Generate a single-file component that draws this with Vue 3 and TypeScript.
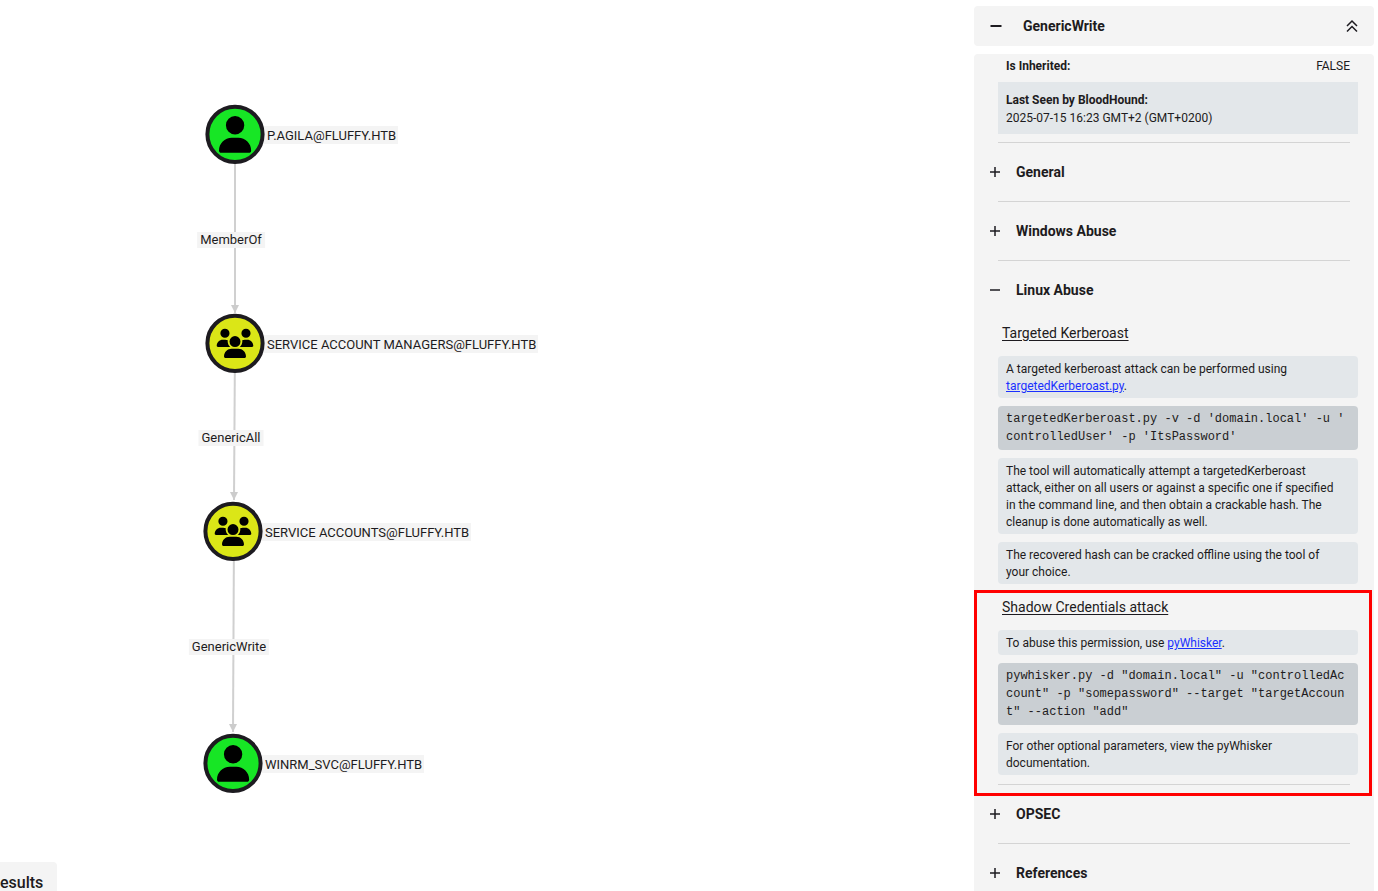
<script setup lang="ts">
import { ref } from 'vue'

type NodeKind = 'user' | 'group'

interface GraphNode {
  name: string
  kind: NodeKind
  x: number
  y: number
}

interface GraphEdge {
  label: string
  x1: number
  y1: number
  x2: number
  y2: number
  labelX: number
  labelY: number
}

const nodes: GraphNode[] = [
  { name: 'P.AGILA@FLUFFY.HTB', kind: 'user', x: 235, y: 134 },
  { name: 'SERVICE ACCOUNT MANAGERS@FLUFFY.HTB', kind: 'group', x: 235, y: 343 },
  { name: 'SERVICE ACCOUNTS@FLUFFY.HTB', kind: 'group', x: 233, y: 531 },
  { name: 'WINRM_SVC@FLUFFY.HTB', kind: 'user', x: 233, y: 763 },
]

const edges: GraphEdge[] = [
  { label: 'MemberOf', x1: 235, y1: 134, x2: 235, y2: 313, labelX: 231, labelY: 240 },
  { label: 'GenericAll', x1: 235, y1: 343, x2: 234, y2: 500, labelX: 231, labelY: 438 },
  { label: 'GenericWrite', x1: 234, y1: 531, x2: 233, y2: 732, labelX: 229, labelY: 647 },
]

const arrow = (e: GraphEdge): string =>
  `${e.x2 - 4},${e.y2 - 8} ${e.x2 + 4},${e.y2 - 8} ${e.x2},${e.y2}`

const place = (x: number, y: number) => ({ left: `${x}px`, top: `${y}px` })

const targetedCommand = "targetedKerberoast.py -v -d 'domain.local' -u '\ncontrolledUser' -p 'ItsPassword'"
const whiskerCommand =
  'pywhisker.py -d "domain.local" -u "controlledAccount" -p "somepassword" --target "targetAccount" --action "add"'

const panelOpen = ref(true)
const open = ref<Record<string, boolean>>({ linux: true })
const toggle = (key: string) => {
  open.value[key] = !open.value[key]
}
const collapseAll = () => {
  open.value = {}
}
</script>

<template>
  <div class="explore">
    <main class="graph">
      <svg class="edges" aria-hidden="true">
        <g v-for="e in edges" :key="e.label">
          <line :x1="e.x1" :y1="e.y1" :x2="e.x2" :y2="e.y2" />
          <polygon :points="arrow(e)" />
        </g>
      </svg>
      <span v-for="e in edges" :key="e.label" class="edge-label" :style="place(e.labelX, e.labelY)">{{ e.label }}</span>
      <div v-for="n in nodes" :key="n.name" class="node" :style="place(n.x, n.y)">
        <svg class="disc" :class="n.kind" viewBox="-30 -30 60 60" aria-hidden="true">
          <circle cy="0.300" r="27.600" />
          <path
            v-if="n.kind === 'user'"
            transform="translate(-16 -18) scale(0.0718)"
            d="M224 256A128 128 0 1 0 224 0a128 128 0 1 0 0 256zm-45.700 48C79.800 304 0 383.800 0 482.300C0 498.700 13.300 512 29.700 512H418.300c16.400 0 29.700-13.300 29.700-29.700C448 383.800 368.200 304 269.700 304H178.300z"
          />
          <path
            v-else
            transform="translate(-18.300 -14.300) scale(0.0572)"
            d="M144 0a80 80 0 1 1 0 160A80 80 0 1 1 144 0zM512 0a80 80 0 1 1 0 160A80 80 0 1 1 512 0zM0 298.700C0 239.800 47.800 192 106.700 192h42.700c15.900 0 31 3.500 44.600 9.700c-1.300 7.200-1.900 14.700-1.900 22.300c0 38.200 16.800 72.500 43.300 96H21.300C9.600 320 0 310.400 0 298.700zM405.300 320h-.7c26.600-23.500 43.300-57.800 43.300-96c0-7.600-.7-15-1.900-22.300c13.600-6.300 28.700-9.700 44.600-9.700h42.700C592.200 192 640 239.800 640 298.700c0 11.800-9.600 21.300-21.300 21.300H405.300zM224 224a96 96 0 1 1 192 0 96 96 0 1 1-192 0zM128 485.300C128 411.700 187.700 352 261.300 352H378.700C452.300 352 512 411.700 512 485.300c0 14.700-11.900 26.700-26.700 26.700H154.700c-14.700 0-26.700-11.900-26.700-26.700z"
          />
        </svg>
        <span class="node-label">{{ n.name }}</span>
      </div>
      <div class="results">esults</div>
    </main>

    <aside class="side">
      <header class="title-bar">
        <button class="icon-btn thick" type="button" aria-label="Toggle panel" @click="panelOpen = !panelOpen">
          <svg width="12" height="12" viewBox="0 0 12 12"><path d="M0.500 6H11.500" /></svg>
        </button>
        <h1>GenericWrite</h1>
        <button class="icon-btn" type="button" aria-label="Collapse all" @click="collapseAll">
          <svg width="12" height="14" viewBox="0 0 12 14"><path d="M1 7L6 2L11 7M1 12.500L6 7.500L11 12.500" /></svg>
        </button>
      </header>

      <div v-show="panelOpen" class="body">
        <dl class="facts">
          <div class="fact">
            <dt>Is Inherited:</dt>
            <dd>FALSE</dd>
          </div>
          <div class="fact shaded">
            <dt>Last Seen by BloodHound:</dt>
            <dd>2025-07-15 16:23 GMT+2 (GMT+0200)</dd>
          </div>
        </dl>

        <hr />
        <button class="section" type="button" @click="toggle('general')">
          <svg width="10" height="10" viewBox="0 0 10 10"><path d="M0 5H10M5 0V10" /></svg>General
        </button>
        <hr />
        <button class="section" type="button" @click="toggle('windows')">
          <svg width="10" height="10" viewBox="0 0 10 10"><path d="M0 5H10M5 0V10" /></svg>Windows Abuse
        </button>
        <hr />
        <button class="section" type="button" :aria-expanded="!!open.linux" @click="toggle('linux')">
          <svg width="10" height="10" viewBox="0 0 10 10"><path :d="open.linux ? 'M0 5H10' : 'M0 5H10M5 0V10'" /></svg>Linux Abuse
        </button>
        <div v-if="open.linux" class="attack">
          <h2>Targeted Kerberoast</h2>
          <p>A targeted kerberoast attack can be performed using <a href="#targetedKerberoast">targetedKerberoast.py</a>.</p>
          <pre>{{ targetedCommand }}</pre>
          <p>
            The tool will automatically attempt a targetedKerberoast<br />
            attack, either on all users or against a specific one if specified<br />
            in the command line, and then obtain a crackable hash. The<br />
            cleanup is done automatically as well.
          </p>
          <p>
            The recovered hash can be cracked offline using the tool of<br />
            your choice.
          </p>
        </div>
        <div v-if="open.linux" class="attack marked">
          <h2>Shadow Credentials attack</h2>
          <p>To abuse this permission, use <a href="#pyWhisker">pyWhisker</a>.</p>
          <pre>{{ whiskerCommand }}</pre>
          <p>
            For other optional parameters, view the pyWhisker<br />
            documentation.
          </p>
        </div>
        <hr />
        <button class="section" type="button" @click="toggle('opsec')">
          <svg width="10" height="10" viewBox="0 0 10 10"><path d="M0 5H10M5 0V10" /></svg>OPSEC
        </button>
        <hr />
        <button class="section" type="button" @click="toggle('references')">
          <svg width="10" height="10" viewBox="0 0 10 10"><path d="M0 5H10M5 0V10" /></svg>References
        </button>
      </div>
    </aside>
  </div>
</template>

<style>
body {
  margin: 0;
  background: #fff;
}
</style>

<style scoped>
.explore {
  display: flex;
  height: 100vh;
  overflow: hidden;
  font-family: Roboto, "Liberation Sans", sans-serif;
  font-size: 12px;
  line-height: 17px;
  color: #1d1b20;
}

.graph {
  position: relative;
  flex: 1;
  overflow: hidden;
}

.edges {
  position: absolute;
  inset: 0;
  width: 100%;
  height: 100%;
}

.edges line {
  stroke: #d0d0d0;
  stroke-width: 2;
}

.edges polygon {
  fill: #ccc;
}

.edge-label {
  position: absolute;
  transform: translate(-50%, -50%);
  padding: 0 3px;
  background: #f4f4f4;
  font-size: 13px;
  line-height: 16px;
  white-space: nowrap;
}

.node {
  position: absolute;
  display: flex;
  align-items: center;
  margin: -30px 0 0 -30px;
}

.disc {
  position: relative;
  z-index: 1;
  flex: none;
  width: 60px;
  height: 60px;
}

.disc circle {
  stroke: #1d1b20;
  stroke-width: 4;
}

.disc.user circle {
  fill: #17e625;
}

.disc.group circle {
  fill: #dbe617;
}

.node-label {
  margin: 2px 0 0 -4px;
  padding: 1px 2px 0 6px;
  background: #f4f4f4;
  font-size: 13px;
  line-height: 17px;
  white-space: nowrap;
}

.results {
  position: absolute;
  left: 0;
  bottom: 0;
  padding: 12px 14px 0 0;
  border-top-right-radius: 4px;
  background: #f4f4f4;
  font-size: 16px;
  font-weight: 500;
  line-height: 17px;
}

.side {
  display: flex;
  flex: none;
  flex-direction: column;
  gap: 8px;
  box-sizing: border-box;
  width: 404px;
  padding: 6px 4px 0 0;
}

.title-bar {
  display: flex;
  flex: none;
  align-items: center;
  height: 40px;
  padding: 0 16px;
  border-radius: 4px;
  background: #f4f4f4;
}

h1 {
  flex: 1;
  margin: 0 0 0 21px;
  font-size: 14px;
  font-weight: 700;
  line-height: 20px;
}

button {
  border: 0;
  background: none;
  color: inherit;
  font-family: inherit;
  cursor: pointer;
}

.icon-btn {
  display: flex;
  padding: 0;
}

button svg {
  flex: none;
  fill: none;
  stroke: currentColor;
  stroke-width: 1.5;
}

.icon-btn.thick svg {
  stroke-width: 2;
}

.body {
  flex: 1;
  min-height: 0;
  overflow: hidden;
  border-radius: 4px 4px 0 0;
  background: #f4f4f4;
}

.facts {
  margin: 0 16px 8px 24px;
  line-height: 18px;
}

.fact {
  display: flex;
  justify-content: space-between;
  padding: 3px 8px 7px;
}

.fact.shaded {
  flex-direction: column;
  padding: 9px 8px 7px;
  background: #e3e7ea;
}

dt {
  font-weight: 700;
}

dd {
  margin: 0;
}

hr {
  height: 1px;
  margin: 0 24px;
  border: 0;
  background: #d4d4d4;
}

.section {
  display: flex;
  align-items: center;
  gap: 16px;
  width: 100%;
  height: 58px;
  padding: 0 16px;
  font-size: 14px;
  font-weight: 700;
  line-height: 20px;
}

.attack {
  display: flex;
  flex-direction: column;
  gap: 8px;
  padding: 4px 16px 8px 24px;
}

.attack.marked {
  position: relative;
  padding: 5px 16px 9px 24px;
}

.attack.marked::after {
  position: absolute;
  inset: -2px 2px -12px 0;
  border: 3px solid #f00;
  content: "";
  pointer-events: none;
}

h2 {
  margin: 0 4px 5px;
  font-size: 14px;
  font-weight: 400;
  line-height: 20px;
  text-decoration: underline;
  text-underline-offset: 2px;
}

p,
pre {
  margin: 0;
  border-radius: 4px;
}

p {
  padding: 5px 8px 3px;
  background: #e3e7ea;
}

pre {
  padding: 4px 8px;
  background: #cacfd3;
  font-family: "Liberation Mono", monospace;
  font-size: 12px;
  line-height: 18px;
  white-space: pre-wrap;
  word-break: break-all;
}

a {
  color: #1a30ff;
  text-decoration: underline;
}
</style>
